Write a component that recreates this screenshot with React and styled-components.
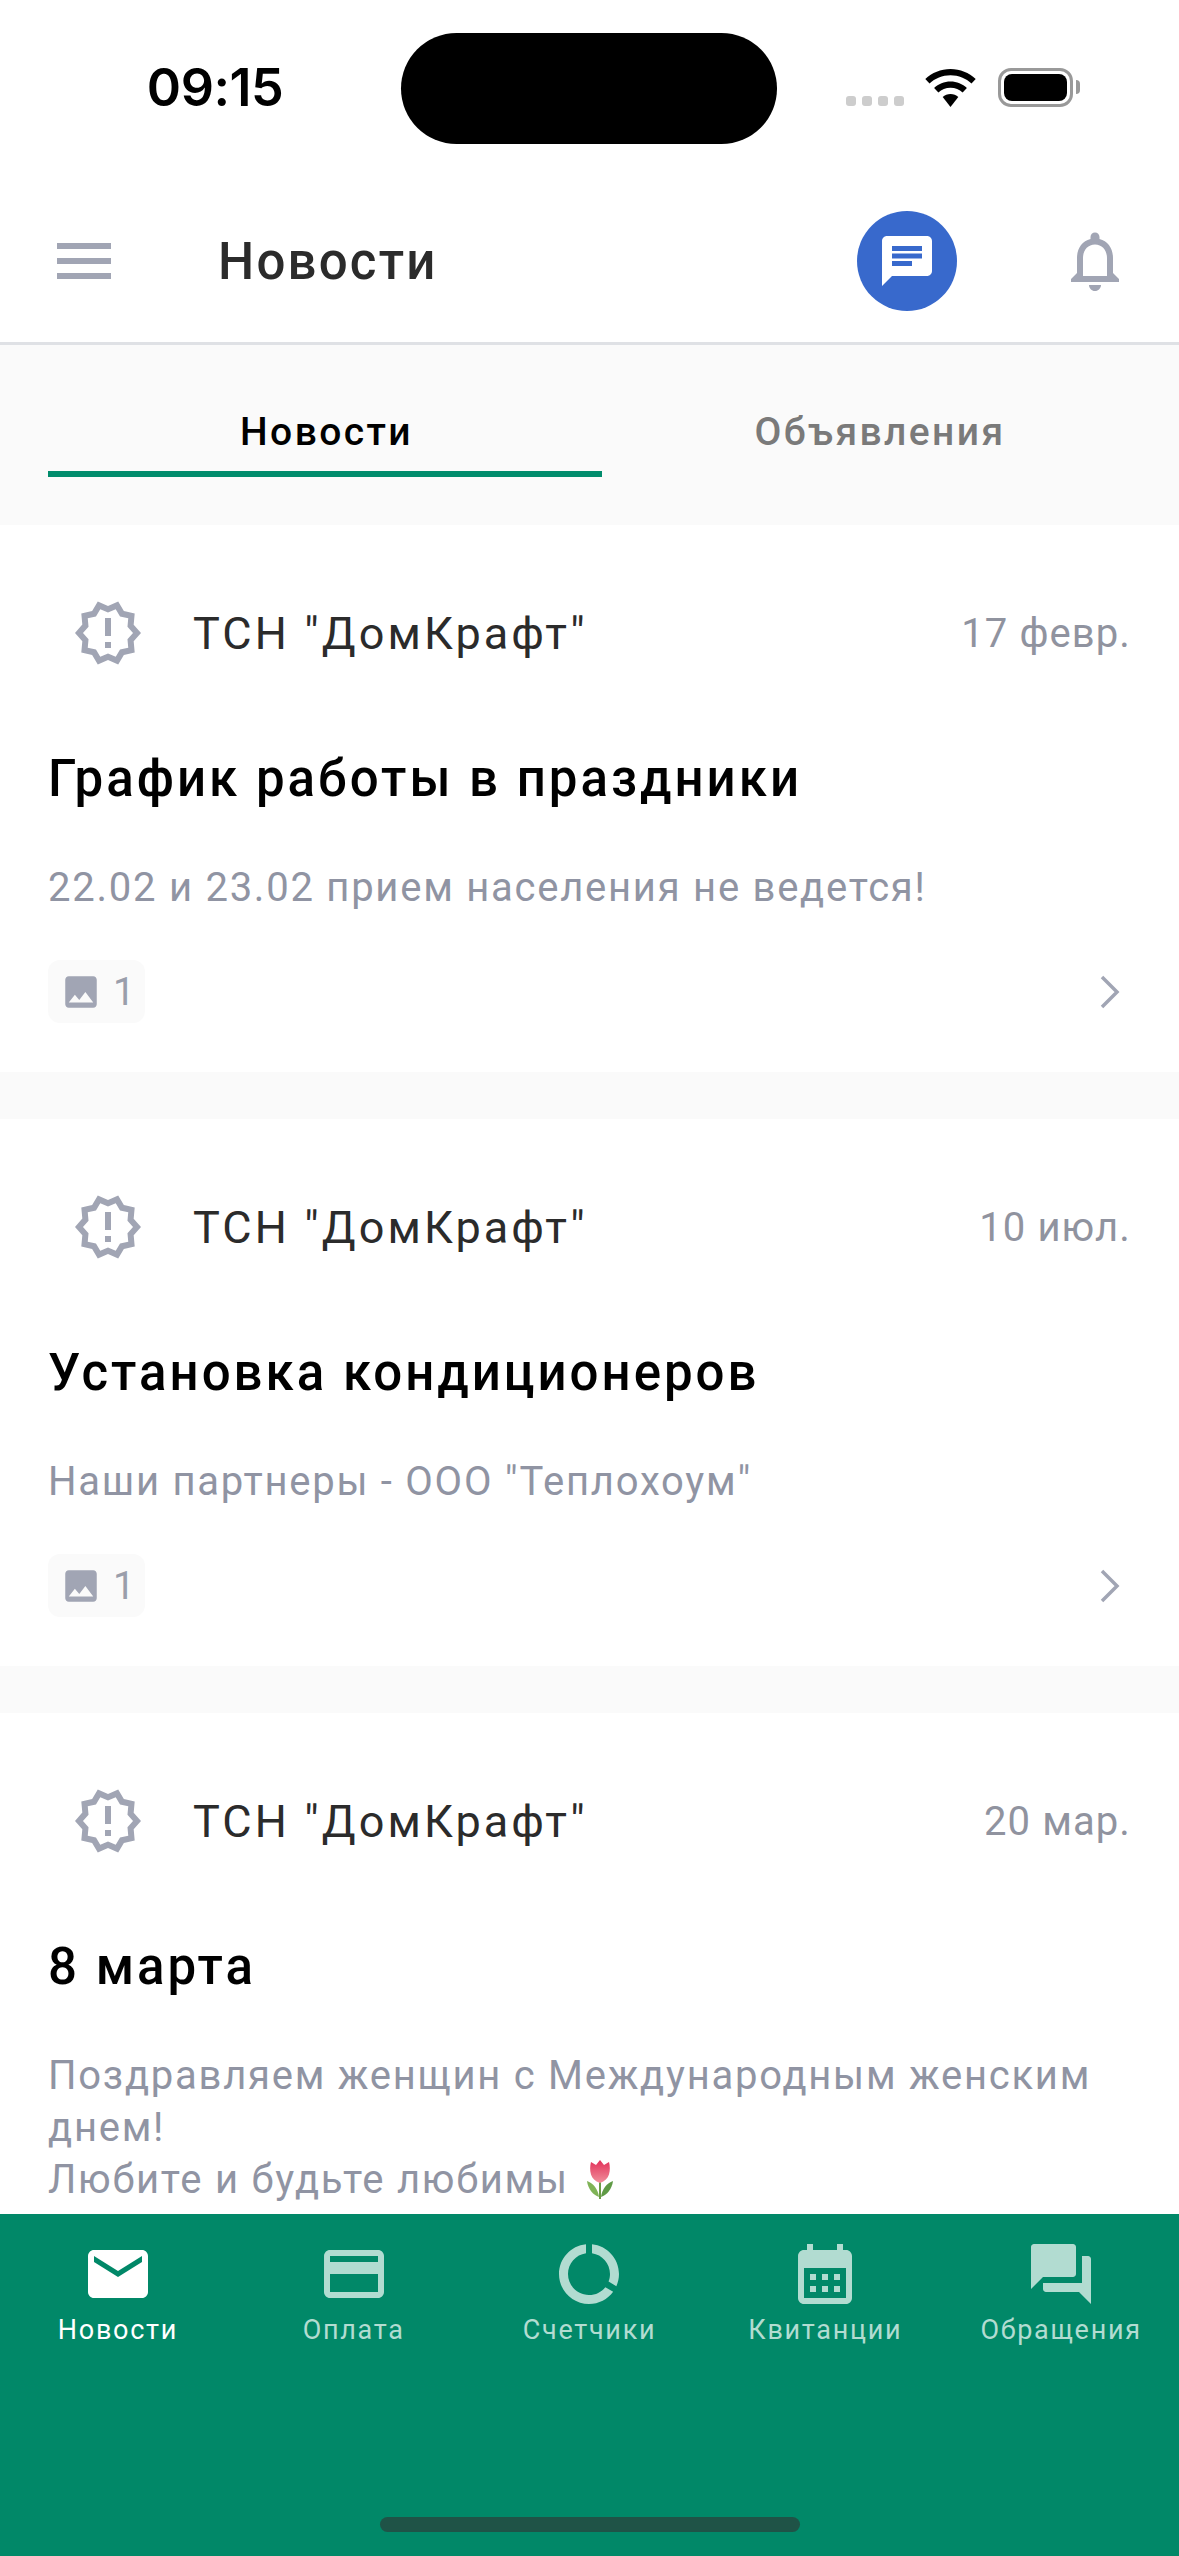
import React from "react";
import styled, { createGlobalStyle } from "styled-components";

const GlobalStyle = createGlobalStyle`
  html, body {
    margin: 0;
    padding: 0;
    background: #fff;
  }
  * {
    box-sizing: border-box;
  }
`;

const Page = styled.div`
  width: 1179px;
  height: 2556px;
  display: flex;
  flex-direction: column;
  overflow: hidden;
  background: #fff;
  font-family: Roboto, "Noto Sans", sans-serif;
`;

const StatusBar = styled.div`
  height: 180px;
  flex: none;
  display: grid;
  grid-template-columns: 401px 376px 1fr;
  align-items: start;
`;
const Clock = styled.div`
  font-family: Inter, "Liberation Sans", sans-serif;
  font-weight: 600;
  font-size: 52px;
  line-height: 60px;
  margin-top: 58px;
  text-align: center;
  padding-left: 29px;
  letter-spacing: -0.5px;
  color: #000;
`;
const Island = styled.div`
  margin-top: 33px;
  height: 111px;
  border-radius: 56px;
  background: #000;
`;
const StatusIcons = styled.div`
  display: flex;
  align-items: flex-end;
  margin: 68px 0 0 69px;
  height: 39px;
`;
const Signal = styled.div`
  display: flex;
  gap: 6px;
  margin-bottom: 1px;
  margin-right: 21px;
`;
const SignalDot = styled.span`
  width: 10px;
  height: 10px;
  border-radius: 3px;
  background: #cdcdcd;
`;
const Battery = styled.div`
  width: 75px;
  height: 39px;
  margin-left: 22px;
  border: 3px solid #999;
  border-radius: 13px;
  padding: 3px;
  position: relative;
  &::after {
    content: "";
    position: absolute;
    right: -10px;
    top: 9px;
    width: 4px;
    height: 14px;
    background: #999;
    border-radius: 0 4px 4px 0;
  }
`;
const BatteryFill = styled.div`
  height: 100%;
  border-radius: 8px;
  background: #000;
`;

const Header = styled.header`
  height: 162px;
  flex: none;
  display: flex;
  align-items: center;
  padding: 0 48px;
`;
const HeaderTitle = styled.h1`
  flex: 1;
  margin: 0 0 0 98px;
  font-size: 51px;
  font-weight: 500;
  letter-spacing: 2.2px;
  color: #2b2b2b;
`;
const ChatButton = styled.div`
  width: 100px;
  height: 100px;
  border-radius: 50%;
  background: #3869cc;
  display: flex;
  align-items: center;
  justify-content: center;
  margin-right: 102px;
`;
const Divider = styled.div`
  height: 3px;
  flex: none;
  background: #dfe1e5;
`;

const Tabs = styled.div`
  height: 180px;
  flex: none;
  background: #fafafa;
  padding: 0 48px 48px;
  display: grid;
  grid-template-columns: 554px 1fr;
  gap: 24px;
`;
const Tab = styled.div`
  display: flex;
  justify-content: center;
  align-items: flex-end;
  padding: 0 0 16px 3px;
  font-size: 39px;
  line-height: 46px;
  font-weight: 500;
  letter-spacing: 2.4px;
  color: ${(p) => (p.$active ? "#000" : "#7a7a7a")};
  border-bottom: 6px solid ${(p) => (p.$active ? "#018c6c" : "transparent")};
`;

const Feed = styled.main`
  flex: 1;
  min-height: 0;
  overflow: hidden;
  background: #fafafa;
  display: flex;
  flex-direction: column;
  gap: 47px;
`;
const Card = styled.article`
  flex: none;
  background: #fff;
  padding: 72px 48px 49px;
`;
const SourceRow = styled.div`
  display: flex;
  align-items: center;
  height: 72px;
  padding-left: 24px;
`;
const SourceName = styled.div`
  flex: 1;
  margin-left: 49px;
  font-size: 45px;
  letter-spacing: 3.1px;
  color: #2b2b2b;
`;
const DateText = styled.div`
  font-size: 40px;
  letter-spacing: 1.1px;
  color: #90939f;
`;
const CardTitle = styled.h2`
  margin: 80px 0 0;
  font-size: 51px;
  line-height: 60px;
  font-weight: 500;
  letter-spacing: 3px;
  color: #000;
`;
const CardBody = styled.p`
  margin: 53px 0 0;
  font-size: 40px;
  line-height: 52px;
  letter-spacing: 1.75px;
  color: #9094a3;
`;
const CardFooter = styled.div`
  margin-top: 46px;
  padding-right: 11px;
  display: flex;
  align-items: center;
  justify-content: space-between;
`;
const PhotoChip = styled.div`
  width: 97px;
  height: 63px;
  border-radius: 12px;
  background: #fafafa;
  display: flex;
  align-items: center;
  padding-left: 12px;
  font-size: 39px;
  color: #9a9eab;
`;
const ChipCount = styled.span`
  margin-left: 11px;
`;

const BottomNav = styled.nav`
  height: 342px;
  flex: none;
  background: #018868;
  display: flex;
  flex-direction: column;
  justify-content: space-between;
  padding: 24px 0 24px;
`;
const NavRow = styled.div`
  display: grid;
  grid-template-columns: repeat(5, 1fr);
`;
const NavItem = styled.div`
  display: flex;
  flex-direction: column;
  align-items: center;
  color: ${(p) => (p.$active ? "#fff" : "#b2dcd1")};
`;
const NavLabel = styled.span`
  font-size: 27px;
  line-height: 32px;
  letter-spacing: 1.7px;
  margin-top: 4px;
`;
const HomeIndicator = styled.div`
  width: 420px;
  height: 15px;
  margin: 0 auto;
  border-radius: 8px;
  background: #1f5347;
`;

const Svg = styled.svg`
  display: block;
  flex: none;
  fill: ${(p) => p.$color || "currentColor"};
`;

const Icon = ({ d, size = 72, color }) => (
  <Svg width={size} height={size} viewBox="0 0 24 24" $color={color}>
    <path d={d} />
  </Svg>
);

const icons = {
  menu: "M3 18h18v-2H3v2zm0-5h18v-2H3v2zm0-7v2h18V6H3z",
  chat: "M20 2H4c-1.1 0-1.99.9-1.99 2L2 22l4-4h14c1.1 0 2-.9 2-2V4c0-1.1-.9-2-2-2zM6 9h12v2H6V9zm8 5H6v-2h8v2zm4-6H6V6h12v2z",
  bell: "M12 22c1.1 0 2-.9 2-2h-4c0 1.1.9 2 2 2zm6-6v-5c0-3.07-1.63-5.64-4.5-6.32V4c0-.83-.67-1.5-1.5-1.5s-1.5.67-1.5 1.5v.68C7.64 5.36 6 7.92 6 11v5l-2 2v1h16v-1l-2-2zm-2 1H8v-6c0-2.48 1.51-4.5 4-4.5s4 2.02 4 4.5v6z",
  release:
    "M23 12l-2.44-2.79.34-3.69-3.61-.82-1.89-3.2L12 2.96 8.6 1.5 6.71 4.69 3.1 5.5l.34 3.7L1 12l2.44 2.79-.34 3.7 3.61.82L8.6 22.5l3.4-1.47 3.4 1.46 1.89-3.19 3.61-.82-.34-3.69L23 12zm-4.51 2.11.26 2.79-2.74.62-1.43 2.41L12 18.82l-2.58 1.11-1.43-2.41-2.74-.62.26-2.8L3.66 12l1.85-2.12-.26-2.78 2.74-.61 1.43-2.41L12 5.18l2.58-1.11 1.43 2.41 2.74.62-.26 2.79L20.34 12l-1.85 2.11zM11 15h2v2h-2zm0-8h2v6h-2z",
  image:
    "M21 19V5c0-1.1-.9-2-2-2H5c-1.1 0-2 .9-2 2v14c0 1.1.9 2 2 2h14c1.1 0 2-.9 2-2zM8.5 13.5l2.5 3.01L14.5 12l4.5 6H5l3.5-4.5z",
  email:
    "M20 4H4c-1.1 0-1.99.9-1.99 2L2 18c0 1.1.9 2 2 2h16c1.1 0 2-.9 2-2V6c0-1.1-.9-2-2-2zm0 4l-8 5-8-5V6l8 5 8-5v2z",
  card: "M20 4H4c-1.11 0-1.99.89-1.99 2L2 18c0 1.11.89 2 2 2h16c1.11 0 2-.89 2-2V6c0-1.11-.89-2-2-2zm0 14H4v-6h16v6zm0-10H4V6h16v2z",
  usage:
    "M13 2.05v3.03c3.39.49 6 3.39 6 6.92 0 .9-.18 1.75-.48 2.54l2.6 1.53c.56-1.24.88-2.62.88-4.07 0-5.18-3.95-9.45-9-9.95zM12 19c-3.87 0-7-3.13-7-7 0-3.53 2.61-6.43 6-6.92V2.05c-5.06.5-9 4.76-9 9.95 0 5.52 4.47 10 9.99 10 3.31 0 6.24-1.61 8.06-4.09l-2.6-1.53C16.17 17.98 14.21 19 12 19z",
  calendar:
    "M19 4h-1V2h-2v2H8V2H6v2H5c-1.11 0-1.99.9-1.99 2L3 20c0 1.1.89 2 2 2h14c1.1 0 2-.9 2-2V6c0-1.1-.9-2-2-2zm0 16H5V10h14v10zM9 12H7v2h2v-2zm4 0h-2v2h2v-2zm4 0h-2v2h2v-2zm-8 4H7v2h2v-2zm4 0h-2v2h2v-2zm4 0h-2v2h2v-2z",
  answer:
    "M21 6h-2v9H6v2c0 .55.45 1 1 1h11l4 4V7c0-.55-.45-1-1-1zm-4 6V3c0-.55-.45-1-1-1H3c-.55 0-1 .45-1 1v14l4-4h10c.55 0 1-.45 1-1z",
};

const Wifi = () => (
  <svg width="51" height="38" viewBox="0 0 51 38">
    <path
      d="M25.5 0C15.8 0 7 3.800 0.300 10l4.200 4.500C10 9.300 17.400 6.200 25.500 6.200S41 9.300 46.500 14.500L50.700 10C44 3.800 35.200 0 25.500 0Z"
      fill="#000"
    />
    <path
      d="M25.500 12.500C19.200 12.500 13.400 15 9.100 19l4.300 4.500c3.200-3 7.400-4.800 12.100-4.800s8.900 1.800 12.100 4.800l4.300-4.500C37.600 15 31.800 12.500 25.500 12.500Z"
      fill="#000"
    />
    <path
      d="M25.500 25c-3 0-5.800 1.200-7.800 3.100L25.500 38l7.800-9.900C31.300 26.200 28.500 25 25.500 25Z"
      fill="#000"
    />
  </svg>
);

const Chevron = () => (
  <svg width="20" height="34" viewBox="0 0 20 34">
    <path d="M2 2L17 17L2 32" fill="none" stroke="#a1a5b4" strokeWidth="3.500" />
  </svg>
);

const TulipSvg = styled.svg`
  vertical-align: -6px;
  margin-left: 4px;
`;

const Tulip = () => (
  <TulipSvg width="30" height="40" viewBox="0 0 30 40">
    <defs>
      <linearGradient id="bloom" x1="0" y1="0" x2="0" y2="1">
        <stop offset="0" stopColor="#e22f58" />
        <stop offset="1" stopColor="#f0909c" />
      </linearGradient>
    </defs>
    <path d="M14 20h2v20h-2z" fill="#6b9c46" />
    <path d="M14 38C8 36 3 30 2 22c6 2 11 8 12 16Z" fill="#7fb356" />
    <path d="M16 38c6-2 11-8 12-16-6 2-11 8-12 16Z" fill="#5f9a45" />
    <path
      d="M6 3l5 3 4-5 4 5 5-3c2 8 1 18-9 21C5 21 4 11 6 3Z"
      fill="url(#bloom)"
    />
  </TulipSvg>
);

const news = [
  {
    date: "17 февр.",
    title: "График работы в праздники",
    body: "22.02 и 23.02 прием населения не ведется!",
    photos: 1,
  },
  {
    date: "10 июл.",
    title: "Установка кондиционеров",
    body: 'Наши партнеры - ООО "Теплохоум"',
    photos: 1,
  },
  {
    date: "20 мар.",
    title: "8 марта",
    body: (
      <>
        Поздравляем женщин с Международным женским днем!
        <br />
        Любите и будьте любимы <Tulip />
      </>
    ),
  },
];

const navItems = [
  { label: "Новости", icon: icons.email, active: true },
  { label: "Оплата", icon: icons.card },
  { label: "Счетчики", icon: icons.usage },
  { label: "Квитанции", icon: icons.calendar },
  { label: "Обращения", icon: icons.answer },
];

const App = () => {
  return (
    <Page>
      <GlobalStyle />
      <StatusBar>
        <Clock>09:15</Clock>
        <Island />
        <StatusIcons>
          <Signal>
            <SignalDot />
            <SignalDot />
            <SignalDot />
            <SignalDot />
          </Signal>
          <Wifi />
          <Battery>
            <BatteryFill />
          </Battery>
        </StatusIcons>
      </StatusBar>
      <Header>
        <Icon d={icons.menu} color="#a1a5b4" />
        <HeaderTitle>Новости</HeaderTitle>
        <ChatButton>
          <Icon d={icons.chat} size={60} color="#fff" />
        </ChatButton>
        <Icon d={icons.bell} color="#a1a5b4" />
      </Header>
      <Divider />
      <Tabs>
        <Tab $active>Новости</Tab>
        <Tab>Объявления</Tab>
      </Tabs>
      <Feed>
        {news.map((item) => (
          <Card key={item.title}>
            <SourceRow>
              <Icon d={icons.release} color="#a1a5b4" />
              <SourceName>ТСН "ДомКрафт"</SourceName>
              <DateText>{item.date}</DateText>
            </SourceRow>
            <CardTitle>{item.title}</CardTitle>
            <CardBody>{item.body}</CardBody>
            {item.photos && (
              <CardFooter>
                <PhotoChip>
                  <Icon d={icons.image} size={42} color="#a1a5b4" />
                  <ChipCount>{item.photos}</ChipCount>
                </PhotoChip>
                <Chevron />
              </CardFooter>
            )}
          </Card>
        ))}
      </Feed>
      <BottomNav>
        <NavRow>
          {navItems.map((item) => (
            <NavItem key={item.label} $active={item.active}>
              <Icon d={item.icon} />
              <NavLabel>{item.label}</NavLabel>
            </NavItem>
          ))}
        </NavRow>
        <HomeIndicator />
      </BottomNav>
    </Page>
  );
};

export default App;
